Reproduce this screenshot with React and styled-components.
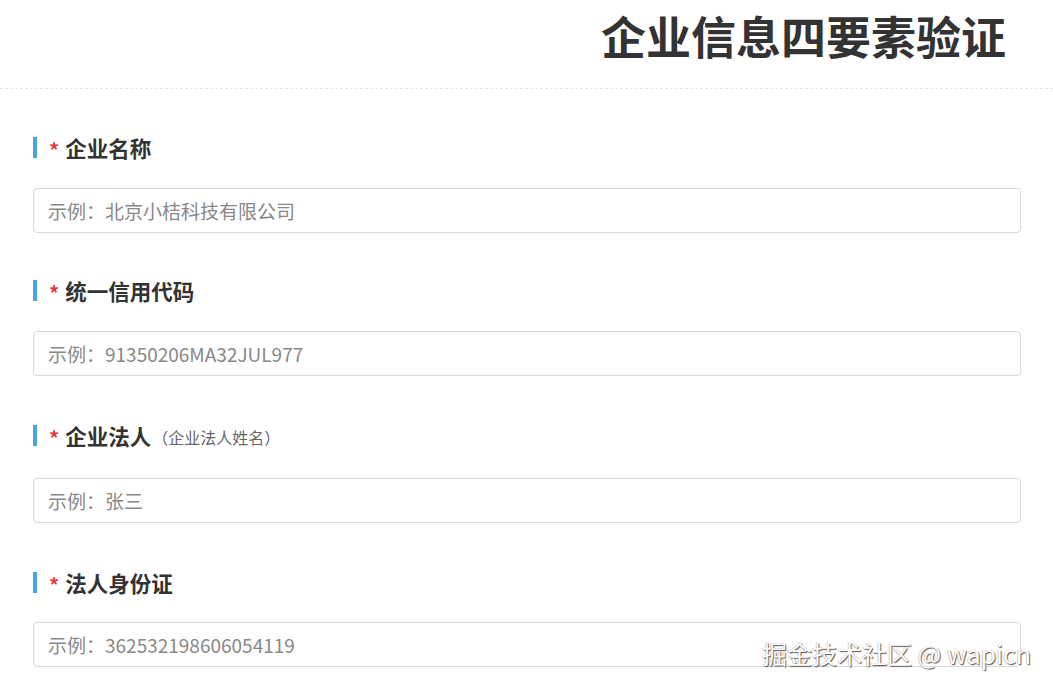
import React from 'react';
import styled, { createGlobalStyle } from 'styled-components';

const GlobalStyle = createGlobalStyle`
  html, body {
    margin: 0;
    padding: 0;
    background: #fff;
    font-family: "Noto Sans CJK SC", "Noto Sans", sans-serif;
    color: #333;
  }
`;

const Page = styled.div`
  position: relative;
  min-height: 688px;
  overflow: hidden;
`;

const Header = styled.header`
  box-sizing: border-box;
  height: 89px;
  display: flex;
  align-items: flex-start;
  justify-content: flex-end;
  padding: 13px 47px 0 0;
  border-bottom: 1px dashed #e8e8e8;
`;

const Title = styled.h1`
  margin: 0;
  font-size: 45px;
  font-weight: 700;
  color: #333;
  line-height: 1;
`;

const Form = styled.form`
  padding: 0 32px 0 33px;
`;

const Field = styled.div`
  display: flex;
  flex-direction: column;
  padding-top: ${(p) => p.$top}px;
`;

const Label = styled.div`
  height: 30px;
  display: flex;
  align-items: center;
  margin-bottom: ${(p) => p.$gap}px;
`;

const Bar = styled.span`
  width: 4px;
  height: 21px;
  background: #4aa6e2;
  margin: -3px 12px 0 0;
`;

const Star = styled.span`
  color: #e5393b;
  font-size: 20px;
  font-weight: 700;
  margin-right: 6px;
  line-height: 1;
  padding-top: 1px;
`;

const LabelText = styled.span`
  font-size: 21.5px;
  font-weight: 700;
  color: #333;
  margin-top: -4px;
`;

const Hint = styled.span`
  font-size: 16px;
  color: #666;
  margin-left: 1px;
`;

const Input = styled.input`
  box-sizing: border-box;
  width: 100%;
  height: 45px;
  border: 1px solid #d9d9d9;
  border-radius: 4px;
  padding: 0 14px;
  font-family: inherit;
  font-size: 19px;
  color: #333;
  outline: none;

  &::placeholder {
    color: #888;
  }
`;

const Watermark = styled.div`
  position: absolute;
  right: 22px;
  bottom: 17px;
  font-size: 25px;
  color: #fff;
  text-shadow: 1px 1px 1px #555, -0.5px -0.5px 0 #aaa;
  pointer-events: none;
`;

const fields = [
  { label: '企业名称', placeholder: '示例：北京小桔科技有限公司', top: 45, gap: 24 },
  { label: '统一信用代码', placeholder: '示例：91350206MA32JUL977', top: 44, gap: 24 },
  { label: '企业法人', hint: '（企业法人姓名）', placeholder: '示例：张三', top: 46, gap: 26 },
  { label: '法人身份证', placeholder: '示例：362532198606054119', top: 46, gap: 23 },
];

export default function App() {
  return (
    <Page>
      <GlobalStyle />
      <Header>
        <Title>企业信息四要素验证</Title>
      </Header>
      <Form>
        {fields.map((f) => (
          <Field key={f.label} $top={f.top}>
            <Label $gap={f.gap}>
              <Bar />
              <Star>*</Star>
              <LabelText>{f.label}</LabelText>
              {f.hint && <Hint>{f.hint}</Hint>}
            </Label>
            <Input placeholder={f.placeholder} />
          </Field>
        ))}
      </Form>
      <Watermark>掘金技术社区 @ wapicn</Watermark>
    </Page>
  );
}
